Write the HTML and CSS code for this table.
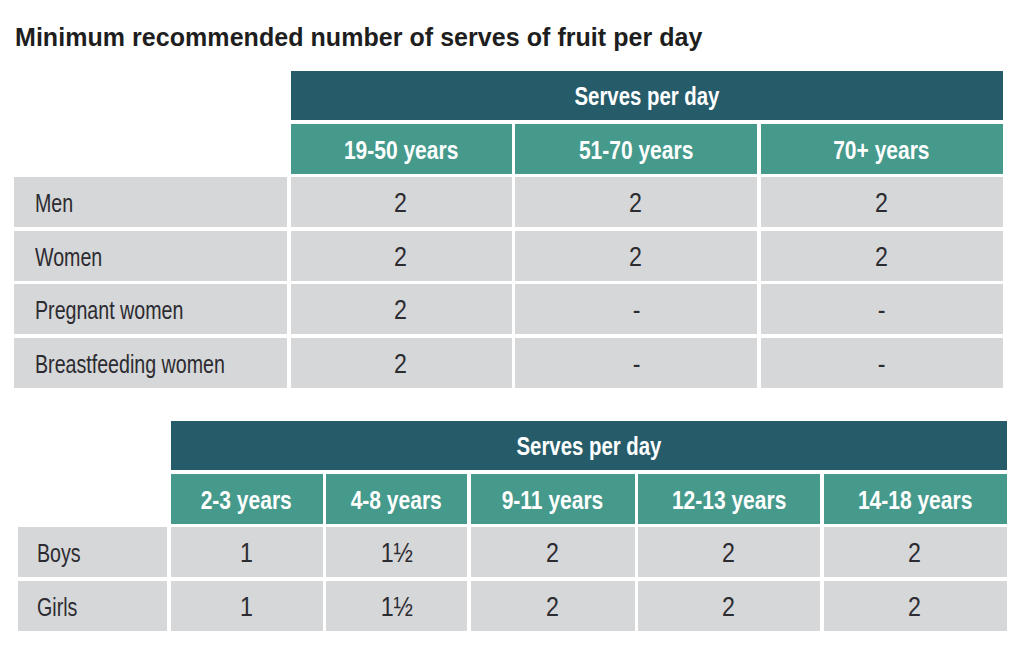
FILE: index.html
```html
<!DOCTYPE html>
<html lang="en">
<head>
<meta charset="utf-8">
<title>Minimum recommended number of serves of fruit per day</title>
<link rel="stylesheet" href="styles.css">
</head>
<body>
<main class="page">
  <h1 class="title">Minimum recommended number of serves of fruit per day</h1>

  <section class="chart chart--adults">
    <div class="corner"></div>
    <div class="group-head"><span class="t">Serves per day</span></div>
    <div class="age-head"><span class="t">19-50 years</span></div>
    <div class="age-head"><span class="t">51-70 years</span></div>
    <div class="age-head"><span class="t">70+ years</span></div>

    <div class="label"><span class="t">Men</span></div>
    <div class="val"><span class="t">2</span></div>
    <div class="val"><span class="t">2</span></div>
    <div class="val"><span class="t">2</span></div>

    <div class="label"><span class="t">Women</span></div>
    <div class="val"><span class="t">2</span></div>
    <div class="val"><span class="t">2</span></div>
    <div class="val"><span class="t">2</span></div>

    <div class="label"><span class="t">Pregnant women</span></div>
    <div class="val"><span class="t">2</span></div>
    <div class="val"><span class="t">-</span></div>
    <div class="val"><span class="t">-</span></div>

    <div class="label"><span class="t">Breastfeeding women</span></div>
    <div class="val"><span class="t">2</span></div>
    <div class="val"><span class="t">-</span></div>
    <div class="val"><span class="t">-</span></div>
  </section>

  <section class="chart chart--children">
    <div class="corner"></div>
    <div class="group-head"><span class="t">Serves per day</span></div>
    <div class="age-head"><span class="t">2-3 years</span></div>
    <div class="age-head"><span class="t">4-8 years</span></div>
    <div class="age-head"><span class="t">9-11 years</span></div>
    <div class="age-head"><span class="t">12-13 years</span></div>
    <div class="age-head"><span class="t">14-18 years</span></div>

    <div class="label"><span class="t">Boys</span></div>
    <div class="val"><span class="t">1</span></div>
    <div class="val"><span class="t">1½</span></div>
    <div class="val"><span class="t">2</span></div>
    <div class="val"><span class="t">2</span></div>
    <div class="val"><span class="t">2</span></div>

    <div class="label"><span class="t">Girls</span></div>
    <div class="val"><span class="t">1</span></div>
    <div class="val"><span class="t">1½</span></div>
    <div class="val"><span class="t">2</span></div>
    <div class="val"><span class="t">2</span></div>
    <div class="val"><span class="t">2</span></div>
  </section>
</main>
</body>
</html>
```

FILE: styles.css
```css
html, body {
  margin: 0;
  padding: 0;
  background: #ffffff;
}

body {
  font-family: "Liberation Sans", Arial, sans-serif;
  color: #2c2b31;
}

.page {
  padding: 23px 0 0 14px;
  width: 1010px;
}

.title {
  margin: 0 0 19px 1px;
  font-size: 25px;
  line-height: 29px;
  font-weight: 700;
  color: #1e1e20;
  letter-spacing: 0.05px;
}

.chart {
  display: grid;
  row-gap: 3.5px;
  column-gap: 3.5px;
}

.chart--adults {
  grid-template-columns: 273px 221px 242px 242px;
  grid-template-rows: 49px 50px 50px 50px 50px 50px;
}

.chart--children {
  margin-top: 33.5px;
  margin-left: 4px;
  grid-template-columns: 149px 152px 141px 164px 182px 183px;
  grid-template-rows: 49px 50px 50px 50px;
}

.corner {
  grid-column: 1;
  grid-row: 1 / span 2;
}

.group-head,
.age-head,
.val,
.label {
  display: flex;
  align-items: center;
  justify-content: center;
  overflow: hidden;
  white-space: nowrap;
}

.t {
  display: inline-block;
  transform-origin: center center;
}

.group-head {
  grid-column: 2 / -1;
  background: #265b69;
  color: #ffffff;
  font-weight: 700;
  font-size: 25px;
  padding-top: 1px;
}

.group-head .t {
  transform: scaleX(0.815);
}

.age-head {
  background: #459a8c;
  color: #ffffff;
  font-weight: 700;
  font-size: 25px;
  padding-top: 4px;
}

.age-head .t {
  transform: scaleX(0.84);
}

.label {
  justify-content: flex-start;
  background: #d6d7d8;
  font-size: 25px;
  padding: 3px 0 0 21px;
}

.chart--children .label {
  padding-left: 19px;
}

.label .t {
  transform-origin: left center;
  transform: scaleX(0.785);
}

.val {
  background: #d6d7d8;
  font-size: 27px;
  padding-top: 3px;
}

.val .t {
  transform: scaleX(0.86);
}
```
